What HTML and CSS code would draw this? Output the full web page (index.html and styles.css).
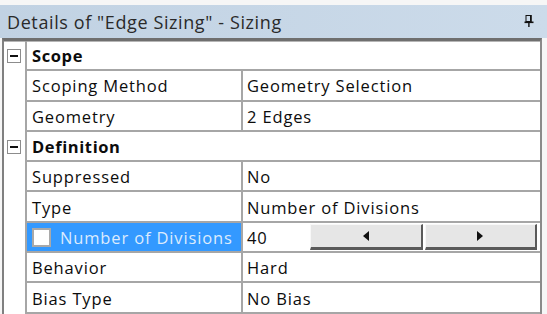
FILE: index.html
```html
<!DOCTYPE html>
<html>
<head>
<meta charset="utf-8">
<link rel="stylesheet" href="styles.css">
</head>
<body>
<div class="panel">
  <div class="titlebar">
    <span class="title">Details of "Edge Sizing" - Sizing</span>
    <svg class="pin" width="10" height="12" viewBox="0 0 10 12">
      <rect x="2" y="0.5" width="5" height="6" fill="none" stroke="#111" stroke-width="1"/>
      <rect x="6" y="0" width="1.6" height="7" fill="#111"/>
      <rect x="0.5" y="6.5" width="9" height="1.6" fill="#111"/>
      <rect x="4.2" y="7" width="1.4" height="5" fill="#111"/>
    </svg>
  </div>
  <div class="grid">
    <div class="row group">
      <div class="gutter"><span class="toggle"></span></div>
      <div class="cell span">Scope</div>
    </div>
    <div class="row">
      <div class="gutter"></div>
      <div class="cell name">Scoping Method</div>
      <div class="cell value">Geometry Selection</div>
    </div>
    <div class="row">
      <div class="gutter"></div>
      <div class="cell name">Geometry</div>
      <div class="cell value">2 Edges</div>
    </div>
    <div class="row group">
      <div class="gutter"><span class="toggle"></span></div>
      <div class="cell span">Definition</div>
    </div>
    <div class="row">
      <div class="gutter"></div>
      <div class="cell name">Suppressed</div>
      <div class="cell value">No</div>
    </div>
    <div class="row">
      <div class="gutter"></div>
      <div class="cell name">Type</div>
      <div class="cell value">Number of Divisions</div>
    </div>
    <div class="row">
      <div class="gutter"></div>
      <div class="cell name selected"><span class="check"></span>Number of Divisions</div>
      <div class="cell value edit">
        <span class="num">40</span>
        <span class="btn"><span class="arrow left"></span></span>
        <span class="btn"><span class="arrow right"></span></span>
      </div>
    </div>
    <div class="row">
      <div class="gutter"></div>
      <div class="cell name">Behavior</div>
      <div class="cell value">Hard</div>
    </div>
    <div class="row">
      <div class="gutter"></div>
      <div class="cell name">Bias Type</div>
      <div class="cell value">No Bias</div>
    </div>
  </div>
</div>
</body>
</html>
```
FILE: styles.css
```css
* { box-sizing: border-box; }
html, body {
  margin: 0;
  padding: 0;
  background: #f6f6f6;
  width: 547px;
  height: 314px;
  overflow: hidden;
  font-family: "Open Sans", "Noto Sans", sans-serif;
}
.panel {
  padding-top: 5px;
}
.titlebar {
  height: 33px;
  display: flex;
  align-items: center;
  justify-content: space-between;
  padding: 0 13px 0 7px;
  background: linear-gradient(to right, #c1d2e3, #ccdbea);
  color: #2a2a2a;
}
.title {
  font-size: 18px;
  letter-spacing: 0.6px;
}
.pin { display: block; margin-top: -2px; }
.grid {
  margin-left: 2px;
  width: 540px;
  background: #fff;
  border-top: 3px solid #6f6f6f;
  border-left: 2px solid #808080;
  border-right: 2px solid #8a8a8a;
  box-shadow: inset 0 1px 0 #b5b5b5;
}
.row {
  display: flex;
  height: 30.3px;
}
.gutter {
  width: 23px;
  flex: none;
  border-right: 2px solid #a6a6a6;
  display: flex;
  align-items: center;
  justify-content: center;
  padding-right: 2px;
}
.toggle {
  width: 14px;
  height: 14px;
  border: 1px solid #8c8c8c;
  background: #fff;
  position: relative;
}
.toggle::after {
  content: "";
  position: absolute;
  left: 2px;
  right: 2px;
  top: 5px;
  height: 2px;
  background: #111;
}
.cell {
  display: flex;
  align-items: center;
  font-size: 16.5px;
  letter-spacing: 0.85px;
  color: #0c0c0c;
  border-bottom: 2px solid #a6a6a6;
  white-space: nowrap;
  padding-top: 1px;
}
.span {
  flex: 1;
  font-weight: bold;
  letter-spacing: 0.6px;
  padding-left: 5px;
}
.name {
  width: 216px;
  flex: none;
  padding-left: 5px;
  border-right: 2px solid #a6a6a6;
}
.value {
  flex: 1;
  padding-left: 4px;
}
.selected {
  background: #3399ff;
  color: #dcebfd;
  padding-left: 5px;
}
.check {
  width: 19px;
  height: 19px;
  background: #fff;
  border: 2px solid #a9a9a9;
  margin-right: 9px;
  flex: none;
}
.edit {
  padding-right: 3px;
}
.num {
  width: 63px;
  flex: none;
}
.btn {
  height: 26px;
  flex: 1;
  background: #e6e6e6;
  border-top: 1px solid #f8f8f8;
  border-left: 1px solid #f8f8f8;
  border-right: 2px solid #5a5a5a;
  border-bottom: 3px solid #5a5a5a;
  display: flex;
  align-items: center;
  justify-content: center;
  margin-right: 2px;
}
.btn:last-child { margin-right: 0; }
.arrow {
  width: 0;
  height: 0;
  border-top: 5px solid transparent;
  border-bottom: 5px solid transparent;
}
.arrow.left { border-right: 6px solid #111; }
.arrow.right { border-left: 6px solid #111; }
```
